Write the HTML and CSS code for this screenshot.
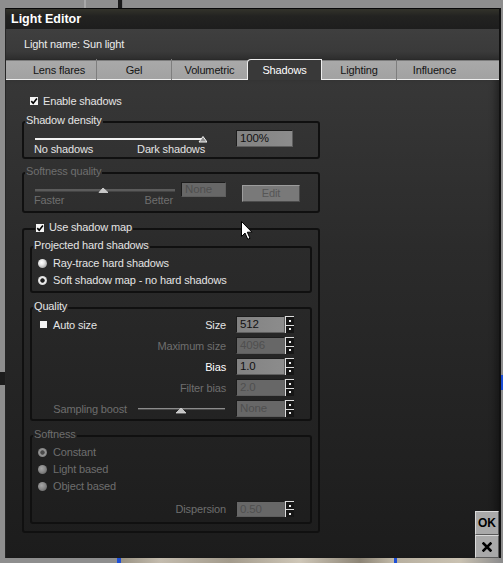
FILE: index.html
```html
<!DOCTYPE html>
<html>
<head>
<meta charset="utf-8">
<title>Light Editor</title>
<link rel="stylesheet" href="styles.css">
</head>
<body>
<div class="top-strip"></div>
<div class="middle">
  <div class="side-left"></div>
  <div class="dialog">
    <div class="titlebar">Light Editor</div>
    <div class="namebar">Light name: Sun light</div>
    <div class="tabs">
      <div class="tab sep">Lens flares</div>
      <div class="tab sep">Gel</div>
      <div class="tab">Volumetric</div>
      <div class="tab active">Shadows</div>
      <div class="tab sep">Lighting</div>
      <div class="tab">Influence</div>
    </div>
    <div class="panel">
      <div class="left">
        <div class="check-row">
          <span class="cb"><svg width="8" height="8" viewBox="0 0 8 8"><path d="M1.3 4.1 L3.2 6.2 L6.9 1.4" stroke="#000" stroke-width="1.6" fill="none"/></svg></span>
          <span>Enable shadows</span>
        </div>

        <fieldset class="group density">
          <legend>Shadow density</legend>
          <div class="density-row">
            <div class="slider-block w172">
              <svg class="slider" width="172" height="13" viewBox="0 0 172 13">
                <rect x="0" y="8" width="168" height="2" fill="#f2f2f2"/>
                <polygon points="168,6.5 164,12 172,12" fill="#8e8e8e" stroke="#f4f4f4" stroke-width="1"/>
              </svg>
              <div class="slider-labels"><span>No shadows</span><span>Dark shadows</span></div>
            </div>
            <div class="field w57 h17">100%</div>
          </div>
        </fieldset>

        <fieldset class="group softq disabled">
          <legend>Softness quality</legend>
          <div class="softq-row">
            <div class="slider-block w140">
              <svg class="slider" width="140" height="13" viewBox="0 0 140 13">
                <rect x="0" y="8.5" width="140" height="1" fill="#8a8a8a"/>
                <rect x="0" y="9.5" width="140" height="1" fill="#5a5a5a"/>
                <polygon points="68,7 64,11.5 73,11.5" fill="#c8c8c8" stroke="#d8d8d8" stroke-width="0.8"/>
              </svg>
              <div class="slider-labels"><span>Faster</span><span>Better</span></div>
            </div>
            <div class="field dis w45 h15 none-field">None</div>
            <div class="btn-edit">Edit</div>
          </div>
        </fieldset>

        <fieldset class="group mapgroup">
          <legend class="check-legend">
            <span class="cb"><svg width="8" height="8" viewBox="0 0 8 8"><path d="M1.3 4.1 L3.2 6.2 L6.9 1.4" stroke="#000" stroke-width="1.6" fill="none"/></svg></span>
            <span>Use shadow map</span>
          </legend>

          <fieldset class="group inner projected">
            <legend>Projected hard shadows</legend>
            <div class="radio-row"><span class="radio"></span><span>Ray-trace hard shadows</span></div>
            <div class="radio-row"><span class="radio on"></span><span>Soft shadow map - no hard shadows</span></div>
          </fieldset>

          <fieldset class="group inner quality">
            <legend>Quality</legend>
            <div class="qrow">
              <div class="auto"><span class="cb"></span><span>Auto size</span></div>
              <span class="qlabel">Size</span>
              <div class="spin-field"><div class="field w49 h17">512</div><div class="spinner"><span><i></i></span><span><i></i></span></div></div>
            </div>
            <div class="qrow">
              <span class="qlabel dim">Maximum size</span>
              <div class="spin-field"><div class="field dis w49 h17">4096</div><div class="spinner"><span><i></i></span><span><i></i></span></div></div>
            </div>
            <div class="qrow">
              <span class="qlabel bright">Bias</span>
              <div class="spin-field"><div class="field w49 h17">1.0</div><div class="spinner"><span><i></i></span><span><i></i></span></div></div>
            </div>
            <div class="qrow">
              <span class="qlabel dim">Filter bias</span>
              <div class="spin-field"><div class="field dis w49 h17">2.0</div><div class="spinner"><span><i></i></span><span><i></i></span></div></div>
            </div>
            <div class="qrow">
              <span class="qlabel dim sampling">Sampling boost</span>
              <svg class="sslider" width="87" height="17" viewBox="0 0 87 17">
                <rect x="0" y="8" width="87" height="1" fill="#8c8c8c"/>
                <rect x="0" y="9" width="87" height="1" fill="#4a4a4a"/>
                <polygon points="43,8 38,13 48,13" fill="#c4c4c4" stroke="#d6d6d6" stroke-width="0.8"/>
              </svg>
              <div class="spin-field"><div class="field dis w49 h17">None</div><div class="spinner"><span><i></i></span><span><i></i></span></div></div>
            </div>
          </fieldset>

          <fieldset class="group inner softness disabled">
            <legend>Softness</legend>
            <div class="radio-row"><span class="radio dis on"></span><span>Constant</span></div>
            <div class="radio-row"><span class="radio dis"></span><span>Light based</span></div>
            <div class="radio-row"><span class="radio dis"></span><span>Object based</span></div>
            <div class="qrow disp">
              <span class="qlabel dim">Dispersion</span>
              <div class="spin-field"><div class="field dis w49 h16">0.50</div><div class="spinner dspin"><span><i></i></span><span><i></i></span></div></div>
            </div>
          </fieldset>
        </fieldset>
      </div>

      <div class="btns">
        <div class="btn ok">OK</div>
        <div class="btn x"><svg width="10" height="10" viewBox="0 0 10 10"><path d="M1.5 1.5 L8.5 8.5 M8.5 1.5 L1.5 8.5" stroke="#000" stroke-width="2.6" stroke-linecap="square"/></svg></div>
      </div>
    </div>
  </div>
  <div class="side-right"></div>
</div>
<div class="bottom-strip"></div>

<svg class="cursor" width="13" height="20" viewBox="0 0 13 20">
  <path d="M0.5 0.5 L0.5 15.5 L4 12 L6.8 18.3 L9 17.3 L6.3 11.2 L11 11.2 Z" fill="#fff" stroke="#000" stroke-width="1"/>
</svg>
</body>
</html>
```

FILE: styles.css
```css
* { box-sizing: border-box; }
html, body { margin: 0; padding: 0; }
body {
  width: 503px;
  height: 563px;
  overflow: hidden;
  position: relative;
  background: #8e8e8e;
  font-family: "Liberation Sans", Arial, sans-serif;
  font-size: 11px;
  letter-spacing: -0.15px;
  color: #e4e4e4;
}

.top-strip {
  height: 8px;
  background: linear-gradient(to right,
    #8e8e8e 0, #8e8e8e 84px, #a8a8a8 84px, #a8a8a8 86px, #8e8e8e 86px,
    #8e8e8e 118px, #1a1a1a 118px, #1a1a1a 122px, #6e6e6e 122px, #8e8e8e 123px);
}

.middle { display: flex; height: 550px; }
.side-left {
  width: 5px;
  background: linear-gradient(#8e8e8e 0, #8e8e8e 364px, #1c1c1c 364px, #1c1c1c 377px, #8e8e8e 377px);
}
.side-right {
  flex: 1;
  background: linear-gradient(#8e8e8e 0, #8e8e8e 367px, #1d4fd6 367px, #1d4fd6 382px, #8e8e8e 382px);
}

.dialog {
  width: 496px;
  display: flex;
  flex-direction: column;
  border-right: 2px solid #111;
  border-left: 1px solid #262626;
}

.titlebar {
  height: 21px;
  border-top: 1px solid #080808;
  background: linear-gradient(#33332b, #232321 35%, #1d1d1d);
  color: #fff;
  font-weight: bold;
  font-size: 12.5px;
  letter-spacing: 0;
  line-height: 20px;
  padding-left: 5px;
}

.namebar {
  height: 30px;
  line-height: 30px;
  padding-left: 18px;
  background: linear-gradient(#3f3f3f, #3a3a3a 75%, #2e2e2e);
  color: #ececec;
}

.tabs {
  height: 21px;
  display: flex;
  padding-left: 16px;
  background: linear-gradient(#2a2a2a 0, #2a2a2a 1px, #7c7c7c 1px, #7c7c7c 2px, #a9a9a9 2px, #a2a2a2 20px, #eeeeee 20px);
}
.tab {
  width: 75px;
  text-align: center;
  color: #141414;
  line-height: 19px;
  padding-top: 2px;
}
.tab.sep { border-right: 1px solid #7e7e7e; }
.tab.active {
  background: #393939;
  color: #fff;
  border: 1px solid #eeeeee;
  border-bottom: none;
  border-top-left-radius: 4px;
  padding-top: 1px;
}

.panel {
  flex: 1;
  display: flex;
  padding: 14px 0 0 16px;
  background: linear-gradient(#373737, #2b2b2b 35%, #1c1c1c);
  box-shadow: inset -7px 0 7px -4px rgba(0, 0, 0, 0.4);
}

.left {
  width: 298px;
  display: flex;
  flex-direction: column;
}

.check-row {
  display: flex;
  align-items: center;
  height: 14px;
  padding-left: 8px;
}
.cb {
  width: 8px;
  height: 8px;
  background: #f4f4f4;
  margin-right: 5px;
  display: flex;
  flex-shrink: 0;
}
.cb svg { display: block; }

.group {
  margin: 0;
  padding: 0;
  min-width: 0;
  border: 2px solid #101010;
  border-radius: 3px;
}
.group > legend {
  padding: 0 1px 3px;
  margin-left: 1px;
  line-height: 13px;
}
.disabled > legend, .disabled { color: #6e6e6e; }

.density { margin-top: 6px; }
.density-row {
  display: flex;
  align-items: flex-start;
  padding: 0 0 2px 11px;
}
.slider-block { display: flex; flex-direction: column; }
.slider-block.w172 { width: 172px; }
.slider-block.w140 { width: 140px; }
.slider { display: block; }
.slider-labels {
  display: flex;
  justify-content: space-between;
  line-height: 12px;
  height: 12px;
  margin-left: -1px;
  padding-right: 2px;
}
.density .field { margin-left: 29px; }

.field {
  border: 1px solid;
  border-color: #1c1c1c #5e5e5e #5e5e5e #1c1c1c;
  background: linear-gradient(to right, #828282, #8c8c8c);
  color: #111;
  padding-left: 3px;
  font-size: 11.5px;
  white-space: nowrap;
  flex-shrink: 0;
}
.field.dis {
  background: #676767;
  color: #4f4f4f;
}
.w57 { width: 57px; }
.w49 { width: 49px; }
.w45 { width: 45px; }
.h17 { height: 17px; line-height: 15px; }
.h16 { height: 16px; line-height: 14px; }
.h15 { height: 15px; line-height: 13px; }

.softq { margin-top: 6px; }
.softq-row {
  display: flex;
  align-items: flex-start;
  padding: 0 0 5px 11px;
}
.none-field { margin-left: 6px; margin-top: 1px; }
.btn-edit {
  width: 58px;
  height: 17px;
  margin-left: 16px;
  margin-top: 4px;
  background: #797979;
  border: 1px solid;
  border-color: #9c9c9c #4c4c4c #4c4c4c #9c9c9c;
  color: #565656;
  text-align: center;
  line-height: 15px;
}

.mapgroup {
  margin-top: 8px;
  padding: 0 6px 7px;
}
.mapgroup > legend.check-legend {
  display: flex;
  align-items: center;
  margin-left: 5px;
}

.inner { margin-top: 7px; }
.projected { margin-top: 2px; padding: 1px 0 4px; }
.quality { padding: 0 0 2px; }
.softness { padding: 1px 0 5px; }

.radio-row {
  display: flex;
  align-items: center;
  height: 14px;
  padding-left: 6px;
}
.radio-row + .radio-row { margin-top: 3px; }
.radio {
  width: 9px;
  height: 9px;
  border-radius: 50%;
  margin-right: 6px;
  flex-shrink: 0;
  background: radial-gradient(circle at 40% 38%, #ffffff 0, #e6e6e6 35%, #a8a8a8 75%, #6a6a6a 100%);
}
.radio.on {
  background: radial-gradient(circle at 50% 50%, #1e1e1e 0, #1e1e1e 1.8px, #f2f2f2 2.6px, #d0d0d0 75%, #7a7a7a 100%);
}
.radio.dis {
  background: radial-gradient(circle at 40% 38%, #a6a6a6 0, #8c8c8c 40%, #6a6a6a 80%, #4a4a4a 100%);
}
.radio.dis.on {
  background: radial-gradient(circle at 50% 50%, #4a4a4a 0, #4a4a4a 1.8px, #999 2.6px, #808080 70%, #555 100%);
}

.qrow {
  display: flex;
  align-items: center;
  justify-content: flex-end;
  height: 17px;
  padding: 0 16px 0 8px;
}
.qrow + .qrow { margin-top: 4px; }
.qrow.disp { margin-top: 8px; height: 16px; }
.auto { display: flex; align-items: center; margin-right: auto; }
.auto .cb { width: 7px; height: 7px; margin-right: 6px; }
.qlabel { margin-right: 10px; white-space: nowrap; }
.qlabel.dim { color: #6e6e6e; }
.qlabel.bright { color: #fff; }
.qlabel.sampling { margin-right: 11px; }
.sslider { display: block; margin-right: 11px; flex-shrink: 0; }

.spin-field { display: flex; flex-shrink: 0; }
.spinner {
  width: 9px;
  display: flex;
  flex-direction: column;
  background: #161616;
}
.spinner span {
  flex: 1;
  display: flex;
  align-items: center;
  justify-content: center;
  border-left: 1px solid #dcdcdc;
  border-top: 1px solid #dcdcdc;
}
.spinner i {
  display: block;
  width: 2px;
  height: 2px;
  background: #f0f0f0;
}

.btns {
  margin-left: auto;
  align-self: flex-end;
  display: flex;
  flex-direction: column;
  width: 24px;
}
.btn {
  display: flex;
  align-items: center;
  justify-content: center;
  background: #a9a9a9;
  border: 1px solid;
  border-color: #dadada #5a5a5a #5a5a5a #dadada;
  color: #000;
  font-weight: bold;
  font-size: 12px;
  letter-spacing: 0;
}
.btn.ok { height: 24px; }
.btn.x { height: 23px; }
.btn svg { display: block; }

.bottom-strip {
  height: 5px;
  background: linear-gradient(to right,
    #8e8e8e 0, #8e8e8e 117px, #1d4fd6 117px, #1d4fd6 121px, #9a9384 121px,
    #c4bcae 160px, #a39b8c 230px, #cfc7b8 300px, #8d8576 360px, #c2baa9 394px,
    #1d4fd6 394px, #1d4fd6 397px, #b8b0a0 397px, #cac2b2 460px, #8e8e8e 501px);
}

.cursor {
  position: absolute;
  left: 241px;
  top: 221px;
}
```
